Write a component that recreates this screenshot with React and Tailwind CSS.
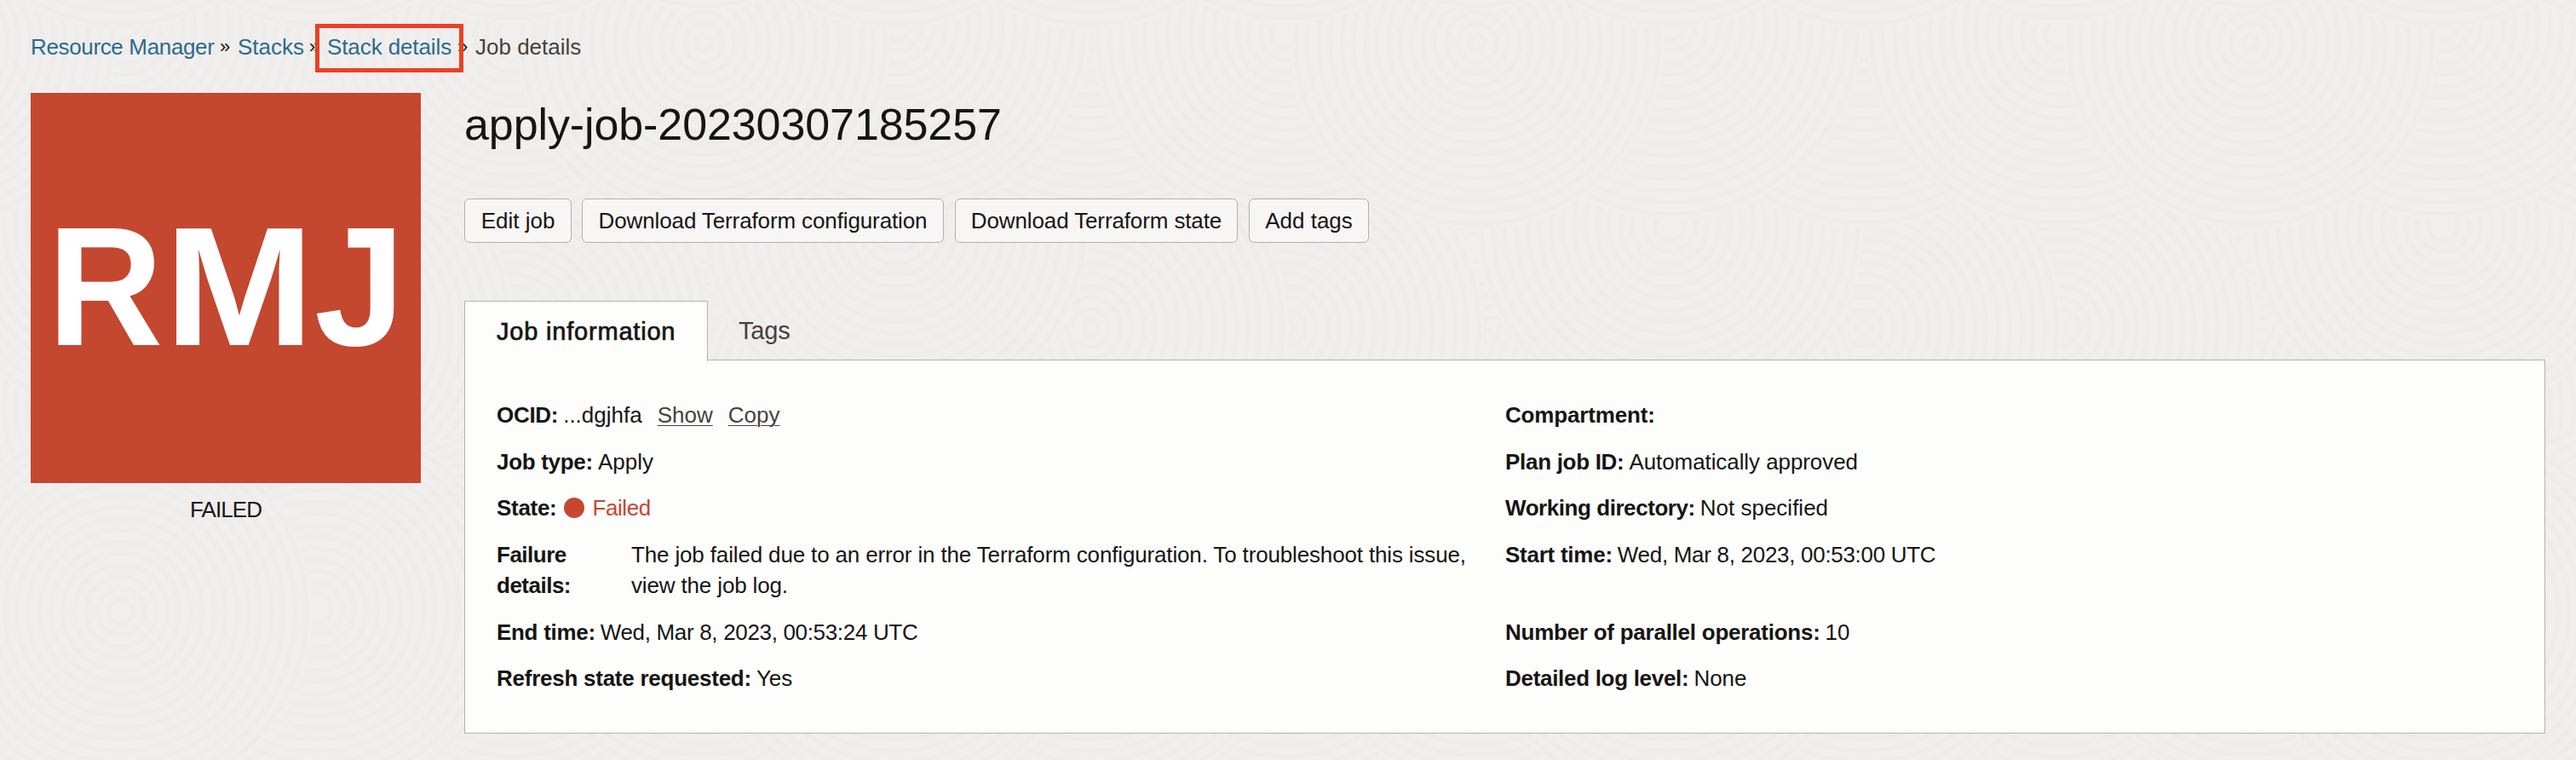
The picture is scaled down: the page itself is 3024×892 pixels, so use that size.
const DISCS = [
  [826, 500, 225], [826, 290, 225], [372, 480, 230], [602, 560, 225], [602, 385, 230], [372, 385, 230],
  [144, 480, 225], [144, 265, 225], [372, 30, 235], [144, 30, 225], [602, 40, 225], [826, 50, 217],
  [602, 718, 215], [826, 718, 200], [372, 715, 225], [142, 718, 222],
];

function Rings({ cx, cy, r }) {
  const rings = [];
  for (let q = r - 4; q > 4; q -= 13.6) rings.push(q);
  return (
    <g>
      <circle cx={cx} cy={cy} r={r + 3} fill="#f0efed" />
      {rings.map((q) => (
        <circle key={q} cx={cx} cy={cy} r={q} fill="none" stroke="#edecea" strokeWidth="5" />
      ))}
    </g>
  );
}

function Texture() {
  return (
    <svg className="absolute inset-0 h-full w-full" aria-hidden="true">
      <defs>
        <pattern id="rings" width="908" height="908" patternUnits="userSpaceOnUse">
          {DISCS.flatMap(([x, y, r]) =>
            [-908, 0, 908].flatMap((dx) =>
              [-908, 0, 908].map((dy) => <Rings key={`${x}-${y}-${dx}-${dy}`} cx={x + dx} cy={y + dy} r={r} />)
            )
          )}
        </pattern>
      </defs>
      <rect width="100%" height="100%" fill="url(#rings)" />
    </svg>
  );
}

function Button({ className, children }) {
  return (
    <button className={`h-[52px] rounded-[6px] border border-[#b5b1ad] bg-[#f7f6f5] text-center whitespace-nowrap ${className}`}>
      {children}
    </button>
  );
}

function Separator({ className }) {
  return <span className={`pl-px text-[22px] text-[#161513] ${className}`}>»</span>;
}

function Field({ label, labelClass = "tracking-[-0.3px]", valueClass = "", children }) {
  return (
    <div className="flex h-[36px] whitespace-nowrap">
      <span className={`mr-[6px] font-bold ${labelClass}`}>{label}</span>
      <span className={valueClass}>{children}</span>
    </div>
  );
}

export default function App() {
  return (
    <div className="relative h-[892px] w-[3024px] overflow-hidden bg-[#f0efed] font-['Liberation_Sans',Arial,sans-serif] text-[26px] leading-[36px] text-[#161513]">
      <Texture />
      <div className="relative px-[36px] pt-[37px]">
        <nav className="flex h-[36px] whitespace-nowrap text-[#2c6a8c]">
          <a className="w-[221px] tracking-[-0.35px]">Resource Manager</a>
          <Separator className="w-[22px]" />
          <a className="w-[83px]">Stacks</a>
          <Separator className="w-[22px]" />
          <a className="w-[152px] tracking-[-0.1px]">Stack details</a>
          <Separator className="w-[22px]" />
          <span className="text-[#45413e]">Job details</span>
        </nav>
        <div className="absolute top-[28px] left-[370px] z-10 h-[57px] w-[174px] border-[5px] border-[#ed4024]" />

        <div className="mt-[36px] flex">
          <aside className="w-[458px]">
            <div className="h-[458px] bg-[#c44730] pt-[117px] pl-[20px] text-[199px] leading-[220px] font-bold whitespace-nowrap text-white">
              <span className="inline-block origin-left scale-x-[0.94]">R</span>
              <span className="-ml-[7px] inline-block origin-left scale-x-[1.06]">M</span>
              <span className="ml-[10px] inline-block origin-left scale-x-[0.96]">J</span>
            </div>
            <div className="mt-[13px] text-center tracking-[-0.9px]">FAILED</div>
          </aside>

          <main className="ml-[51px] w-[2443px]">
            <h1 className="mt-[2px] h-[70px] text-[52px] leading-[70px] tracking-[-0.1px]">apply-job-20230307185257</h1>
            <div className="mt-[52px] flex tracking-[-0.12px]">
              <Button className="w-[126px] tracking-normal">Edit job</Button>
              <Button className="ml-[12px] w-[425px]">Download Terraform configuration</Button>
              <Button className="ml-[13px] w-[332px]">Download Terraform state</Button>
              <Button className="ml-[13px] w-[141px] tracking-normal">Add tags</Button>
            </div>

            <div className="mt-[68px] flex h-[70px] text-[29px] whitespace-nowrap">
              <div className="relative z-10 h-[71px] w-[286px] border border-b-0 border-[#b5b1ad] bg-[#fdfdfc] pt-[17px] pl-[37px] tracking-[0.8px] [-webkit-text-stroke:0.7px_#161513]">
                Job information
              </div>
              <div className="pt-[17px] pl-[36px] tracking-[-0.2px] text-[#45413e]">Tags</div>
            </div>

            <section className="-mt-px flex h-[439px] border border-[#b5b1ad] bg-[#fdfdfc] pt-[46px] pl-[37px]">
              <div className="flex w-[1184px] flex-col gap-[18.7px]">
                <Field label="OCID:">
                  ...dgjhfa
                  <a className="ml-[18px] text-[#45413e] underline decoration-1 underline-offset-[3px]">Show</a>
                  <a className="ml-[18px] text-[#45413e] underline decoration-1 underline-offset-[3px]">Copy</a>
                </Field>
                <Field label="Job type:">Apply</Field>
                <Field label="State:" valueClass="flex tracking-[-0.4px] text-[#c44730]">
                  <i className="mt-[6px] mr-[9px] ml-[3px] h-[24px] w-[24px] rounded-full bg-[#c44730]" />
                  Failed
                </Field>
                <div className="flex h-[72px]">
                  <span className="w-[158px] pr-[40px] font-bold tracking-[-0.5px]">Failure details:</span>
                  <span className="tracking-[-0.15px] whitespace-nowrap">
                    The job failed due to an error in the Terraform configuration. To troubleshoot this issue,
                    <br />
                    view the job log.
                  </span>
                </div>
                <Field label="End time:" valueClass="tracking-[-0.33px]">Wed, Mar 8, 2023, 00:53:24 UTC</Field>
                <Field label="Refresh state requested:" labelClass="tracking-[-0.25px]">Yes</Field>
              </div>
              <div className="flex flex-col gap-[18.7px]">
                <Field label="Compartment:" labelClass="tracking-[-0.16px]" />
                <Field label="Plan job ID:" valueClass="tracking-[-0.08px]">Automatically approved</Field>
                <Field label="Working directory:" labelClass="tracking-[-0.44px]">Not specified</Field>
                <div className="h-[72px]">
                  <Field label="Start time:" labelClass="tracking-[-0.25px]" valueClass="tracking-[-0.3px]">Wed, Mar 8, 2023, 00:53:00 UTC</Field>
                </div>
                <Field label="Number of parallel operations:" labelClass="tracking-[-0.25px]">10</Field>
                <Field label="Detailed log level:">None</Field>
              </div>
            </section>
          </main>
        </div>
      </div>
    </div>
  );
}
